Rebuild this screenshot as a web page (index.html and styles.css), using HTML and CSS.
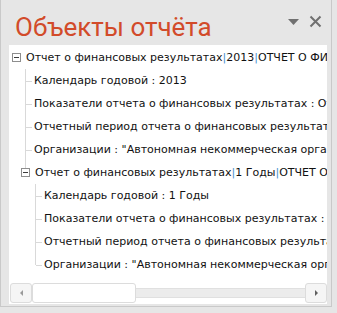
FILE: index.html
```html
<!DOCTYPE html>
<html lang="ru">

<head>
    <meta charset="UTF-8">
    <meta name="viewport" content="width=device-width, initial-scale=1.0">
    <title>Объекты отчёта</title>
    <link rel="stylesheet" href="styles.css">
</head>

<body>
    <div class="pane">
        <div class="pane-header">
            <h1 class="pane-title">Объекты отчёта</h1>
            <div class="pane-tools">
                <svg class="tool-menu" width="11" height="6" viewBox="0 0 11 6">
                    <polygon points="0,0 11,0 5.5,6" fill="#707070" />
                </svg>
                <svg class="tool-close" width="13" height="13" viewBox="0 0 13 13">
                    <path d="M1.5 1.5 L11.5 11.5 M11.5 1.5 L1.5 11.5" stroke="#707070" stroke-width="2" />
                </svg>
            </div>
        </div>
        <div class="tree-box">
            <div class="tree">
                <div class="node">
                    <div class="row">
                        <span class="toggle"></span>
                        <span class="label">Отчет о финансовых результатах<span class="sep">|</span>2013<span class="sep">|</span>ОТЧЕТ О ФИНАНСОВЫХ РЕЗУЛЬТАТАХ</span>
                    </div>
                    <div class="children">
                        <div class="item">
                            <div class="row"><span class="label">Календарь годовой : 2013</span></div>
                        </div>
                        <div class="item">
                            <div class="row"><span class="label">Показатели отчета о финансовых результатах : Отчет о финансовых результатах</span></div>
                        </div>
                        <div class="item">
                            <div class="row"><span class="label">Отчетный период отчета о финансовых результатах : 2013</span></div>
                        </div>
                        <div class="item">
                            <div class="row"><span class="label">Организации : "Автономная некоммерческая организация"</span></div>
                        </div>
                        <div class="item node">
                            <div class="row">
                                <span class="toggle"></span>
                                <span class="label">Отчет о финансовых результатах<span class="sep">|</span>1 Годы<span class="sep">|</span>ОТЧЕТ О ФИНАНСОВЫХ РЕЗУЛЬТАТАХ</span>
                            </div>
                            <div class="children">
                                <div class="item">
                                    <div class="row"><span class="label">Календарь годовой : 1 Годы</span></div>
                                </div>
                                <div class="item">
                                    <div class="row"><span class="label">Показатели отчета о финансовых результатах : Отчет о финансовых результатах</span></div>
                                </div>
                                <div class="item">
                                    <div class="row"><span class="label">Отчетный период отчета о финансовых результатах : 1 Годы</span></div>
                                </div>
                                <div class="item">
                                    <div class="row"><span class="label">Организации : "Автономная некоммерческая организация"</span></div>
                                </div>
                            </div>
                        </div>
                    </div>
                </div>
            </div>
            <div class="hscroll">
                <div class="hscroll-btn"><span class="arrow-left"></span></div>
                <div class="hscroll-thumb"></div>
                <div class="hscroll-track"></div>
                <div class="hscroll-btn"><span class="arrow-right"></span></div>
            </div>
        </div>
    </div>
</body>

</html>
```

FILE: styles.css
```css
body {
    margin: 0;
    background-color: #e6e6e6;
    font-family: "DejaVu Sans", sans-serif;
}

.pane {
    width: 332px;
    height: 307px;
    border-left: 1px solid #c9c9c9;
    border-right: 1px solid #c9c9c9;
    border-bottom: 1px solid #c9c9c9;
    background-color: #e6e6e6;
    display: flex;
    flex-direction: column;
    box-sizing: border-box;
}

.pane-header {
    height: 45px;
    display: flex;
    justify-content: space-between;
    align-items: flex-start;
    padding: 0 9px 0 14px;
}

.pane-title {
    margin: 0;
    padding-top: 13px;
    font-family: Roboto, sans-serif;
    font-weight: 400;
    font-size: 26px;
    line-height: 28px;
    color: #d24b2a;
}

.pane-tools {
    display: flex;
    align-items: center;
    gap: 10px;
    padding-top: 15px;
}

.tool-menu {
    display: block;
}

.tool-close {
    display: block;
}

.tree-box {
    margin-left: 8px;
    width: 318px;
    height: 259px;
    background: #fff;
    display: flex;
    flex-direction: column;
}

.tree {
    flex: 1;
    overflow: hidden;
    white-space: nowrap;
    padding: 1px 0 0 3px;
    font-size: 11px;
    color: #111;
}

.row {
    height: 23px;
    display: flex;
    align-items: center;
}

.toggle {
    width: 7px;
    height: 7px;
    border: 1px solid #8e8e8e;
    background: #fff;
    position: relative;
    margin-right: 5px;
    flex-shrink: 0;
}

.toggle::after {
    content: "";
    position: absolute;
    left: 1px;
    top: 3px;
    width: 5px;
    height: 1px;
    background: #3c3c3c;
}

.children {
    margin-left: 13px;
}

.item {
    position: relative;
    padding-left: 9px;
}

/* vertical guide */
.item::before {
    content: "";
    position: absolute;
    left: 0;
    top: 0;
    bottom: 0;
    border-left: 1px solid #d9d9d9;
}

.item:last-child::before {
    bottom: auto;
    height: 12px;
}

/* horizontal tick */
.item > .row::before {
    content: "";
    position: absolute;
    left: 1px;
    width: 6px;
    border-top: 1px solid #d9d9d9;
    margin-top: 1px;
}

.item.node {
    padding-left: 0;
}

.item.node > .row::before {
    display: none;
}

.item.node > .row .toggle {
    margin-left: -4px;
    z-index: 1;
}

.item.node > .children {
    margin-left: 10px;
}

.sep {
    color: #4a8fd0;
}

.hscroll {
    height: 20px;
    margin: 0 0 1px 1px;
    display: flex;
    align-items: center;
}

.hscroll-btn {
    width: 20px;
    height: 18px;
    border: 1px solid #dcdcdc;
    border-radius: 3px;
    background: #f5f5f5;
    display: flex;
    justify-content: center;
    align-items: center;
}

.hscroll-thumb {
    width: 102px;
    height: 18px;
    border: 1px solid #dcdcdc;
    border-radius: 3px;
    background: #fff;
}

.hscroll-track {
    flex: 1;
    height: 8px;
    background: #ececec;
    border-top: 1px solid #e0e0e0;
    border-bottom: 1px solid #e0e0e0;
}

.arrow-left {
    width: 0;
    height: 0;
    border-top: 3px solid transparent;
    border-bottom: 3px solid transparent;
    border-right: 3px solid #9a9a9a;
}

.arrow-right {
    width: 0;
    height: 0;
    border-top: 3px solid transparent;
    border-bottom: 3px solid transparent;
    border-left: 3px solid #606060;
}
```
